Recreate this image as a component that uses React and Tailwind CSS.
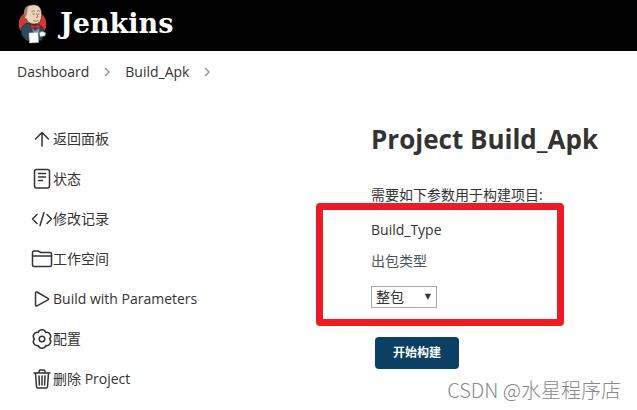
import React from "react";

function JenkinsLogo() {
  return (
    <svg className="h-10 w-[30px] shrink-0" viewBox="0 0 30 40" aria-hidden="true">
      <ellipse cx="14.5" cy="20" rx="13.8" ry="13.5" fill="#d33833" />
      <path d="M4.500 32C2 27 4 21.500 8 19.500l12 1c4 1 6 5 6.500 8.500l-3 7.500H8.500Z" fill="#2c4a5f" stroke="#182a38" strokeWidth=".8" />
      <path d="M7 11C6 4 10 .8 15.500.8c6 0 8.500 4.200 8 10.700 0 5-2 8.500-7 8.500-5 0-7.500-2.500-8-5-2 0-3-2.500-1.500-4Z" fill="#efd3b5" stroke="#3b302a" strokeWidth=".7" />
      <path d="M6.500 12C5 6 7 2 11.500 1.200 9 4 9.500 7 9 9.500L8 13Z" fill="#8d8580" />
      <path d="M13.500 7.500q2-1.500 3.500 0M19 7q2-1 3 .5M14.500 10h2.500M19.500 10h2M18.500 9.500l1.500 3.500-2 .5M15 16.500q3 1.500 5.500 0" fill="none" stroke="#6a5a50" strokeWidth=".7" />
      <path d="m12 22 5 5 5-4-1 6h-5Z" fill="#6f93aa" />
      <path d="m12.500 20 4.500 2 4.500-2 .5 5-5-1.500-4 2Z" fill="#d32f30" stroke="#671d20" strokeWidth=".6" />
      <path d="m11 29 9-.5.500 10-9 .5Z" fill="#fff" stroke="#b6babd" strokeWidth=".5" />
      <path d="m21 29 3-2 4 2-1 3-5 1Z" fill="#f1eeeb" stroke="#4c555b" strokeWidth=".6" />
    </svg>
  );
}

function Icon({ children }) {
  return (
    <svg
      className="h-[22px] w-[22px] shrink-0"
      viewBox="0 0 22 22"
      fill="none"
      stroke="#333"
      strokeWidth="1.500"
      strokeLinecap="round"
      strokeLinejoin="round"
      aria-hidden="true"
    >
      {children}
    </svg>
  );
}

const tasks = [
  { label: "返回面板", icon: <path d="M11 18V5M4.500 11 11 4.500l6.500 6.500" /> },
  {
    label: "状态",
    icon: (
      <>
        <rect x="3.500" y="1.500" width="15" height="18.500" rx="2" />
        <path d="M7.500 5.500h7M7.500 9h7M7.500 12.500h4" />
      </>
    ),
  },
  { label: "修改记录", icon: <path d="M6 6.500 1.500 11 6 15.500M16 6.500l4.500 4.500-4.500 4.500M13 4.500 9 17.500" /> },
  {
    label: "工作空间",
    icon: (
      <>
        <path d="M1.500 17V4.500q0-1.500 1.500-1.500h4l3 1.500h9q1.500 0 1.500 1.500V17q0 1.500-1.500 1.500H3q-1.500 0-1.500-1.500Z" />
        <path d="M1.500 8h19" />
      </>
    ),
  },
  { label: "Build with Parameters", icon: <path d="M4.500 5v12q0 1.500 1.500.8l11-6q1-.8 0-1.500L6 4Q4.500 3.500 4.500 5Z" /> },
  {
    label: "配置",
    icon: (
      <>
        <path d="M7.200 4.400A4 4 0 0 1 14.800 4.400A4 4 0 0 1 18.600 11A4 4 0 0 1 14.800 17.600A4 4 0 0 1 7.200 17.600A4 4 0 0 1 3.400 11A4 4 0 0 1 7.200 4.400Z" />
        <circle cx="11" cy="11" r="2.800" />
      </>
    ),
  },
  {
    label: "删除 Project",
    icon: (
      <>
        <path d="M3 5h16M8 5V3.500Q8 2 9.500 2h3Q14 2 14 3.500V5M4.500 5l1 13.500q.1 1.500 1.500 1.500h8q1.400 0 1.500-1.500L17.500 5" />
        <path d="m8 8 .4 9M11 8v9M14 8l-.4 9" />
      </>
    ),
  },
];

function Chevron() {
  return (
    <svg className="h-3 w-2" viewBox="0 0 8 12" fill="none" stroke="#999" strokeWidth="1.500" aria-hidden="true">
      <path d="m2 2 4 4-4 4" />
    </svg>
  );
}

export default function App() {
  return (
    <div className="relative min-h-screen bg-white font-['Open_Sans','Noto_Sans_CJK_SC',sans-serif] text-sm leading-5 text-[#333]">
      <header className="flex h-[51px] items-center bg-black pb-1 pl-[18px]">
        <a href="#" className="flex items-center gap-3 text-white">
          <JenkinsLogo />
          <span className="font-['Georgia','DejaVu_Serif',serif] text-[27px] leading-8 font-bold">Jenkins</span>
        </a>
      </header>

      <nav aria-label="Breadcrumb" className="flex h-[42px] items-center gap-[14px] pl-[17px]">
        <a href="#">Dashboard</a>
        <Chevron />
        <a href="#">Build_Apk</a>
        <Chevron />
      </nav>

      <div className="flex">
        <aside className="w-[371px] shrink-0 pt-[26px] pl-[31px]">
          <ul>
            {tasks.map((task) => (
              <li key={task.label} className="h-10">
                <a href="#" className="inline-flex h-10 items-center">
                  <Icon>{task.icon}</Icon>
                  {task.label}
                </a>
              </li>
            ))}
          </ul>
        </aside>

        <main className="min-w-0 flex-1 pt-[26px]">
          <h1 className="text-[26px] leading-10 font-bold whitespace-nowrap">Project Build_Apk</h1>
          <form onSubmit={(event) => event.preventDefault()}>
            <p className="pt-[26px]">需要如下参数用于构建项目:</p>
            <div className="relative pt-[15px] pb-4">
              <div className="pointer-events-none absolute -top-[2px] -bottom-px -left-[55px] w-[248px] rounded-sm border-[7px] border-[#ed1c24]" />
              <label htmlFor="build-type" className="block">Build_Type</label>
              <p className="pt-[11px] text-[#4d545d]">出包类型</p>
              <div className="relative mt-[15px] mb-px w-[66px]">
                <select id="build-type" className="block h-[22px] w-full appearance-none border border-[#a9a9a9] bg-white pl-1 leading-5">
                  <option>整包</option>
                </select>
                <span className="pointer-events-none absolute top-0 right-[6px] font-['DejaVu_Sans'] text-[8px] leading-[22px]">▼</span>
              </div>
            </div>
            <button type="submit" className="mt-3 ml-1 h-8 w-[84px] rounded bg-[#0b3f63] text-xs font-bold text-white">开始构建</button>
          </form>
        </main>
      </div>

      <div className="absolute right-4 bottom-1 font-['Noto_Sans_CJK_SC',sans-serif] text-xl leading-8 font-light text-[#888]">CSDN @水星程序店</div>
    </div>
  );
}
